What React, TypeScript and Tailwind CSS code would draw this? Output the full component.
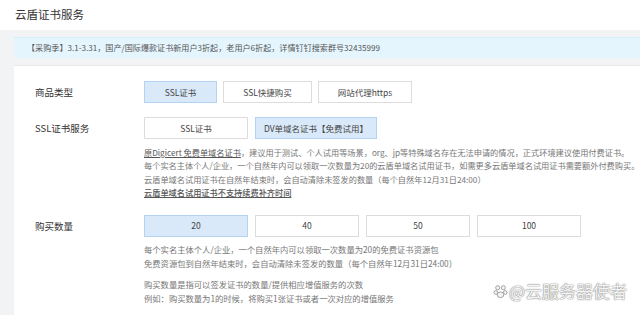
import React from "react";

const Btn = ({ children, active, w }: { children: React.ReactNode; active?: boolean; w: string }) => (
  <div
    className={`${w} h-[22px] flex items-center justify-center border text-[8.5px] text-[#444] ${
      active ? "bg-[#d9e9f9] border-[#b3d3f2]" : "bg-white border-[#dcdcdc]"
    }`}
  >
    {children}
  </div>
);

export default function App() {
  return (
    <div
      className="w-[640px] h-[315px] overflow-hidden bg-[#f2f3f5] relative"
      style={{ fontFamily: '"Noto Sans CJK SC", "Noto Sans", sans-serif' }}
    >
      <div className="h-[30px] bg-white pl-[15px] flex items-center text-[11.5px] text-[#333]">云盾证书服务</div>
      <div className="pl-[14px] pt-[7px]">
        <div className="h-[21px] bg-[#e5f5fe] border-t border-[#d3eefc] flex items-center pl-[13px] text-[8.1px] text-[#555] whitespace-nowrap">
          【采购季】3.1-3.31，国产/国际爆款证书新用户3折起，老用户6折起，详情钉钉搜索群号32435999
        </div>
        <div className="mt-[7px] bg-white h-[260px] pl-[21px] pt-[15px] border-t border-[#e8e8e8]">
          <div className="flex items-center">
            <div className="w-[109px] text-[9.5px] text-[#333]">商品类型</div>
            <div className="flex gap-[6px]">
              <Btn w="w-[73px]" active>SSL证书</Btn>
              <Btn w="w-[89px]">SSL快捷购买</Btn>
              <Btn w="w-[94px]">网站代理https</Btn>
            </div>
          </div>
          <div className="flex items-center mt-[14px]">
            <div className="w-[109px] text-[9.5px] text-[#333]">SSL证书服务</div>
            <div className="flex gap-[7px]">
              <Btn w="w-[104px]">SSL证书</Btn>
              <Btn w="w-[122px]" active>DV单域名证书【免费试用】</Btn>
            </div>
          </div>
          <div className="ml-[109px] mt-[7px] text-[8.2px] leading-[13.4px] text-[#777] whitespace-nowrap">
            <div>
              <span className="underline text-[#555]">原Digicert 免费单域名证书</span>，建议用于测试、个人试用等场景，org、jp等特殊域名存在无法申请的情况，正式环境建议使用付费证书。
            </div>
            <div>每个实名主体个人/企业，一个自然年内可以领取一次数量为20的云盾单域名试用证书，如需更多云盾单域名试用证书需要额外付费购买。</div>
            <div>云盾单域名试用证书在自然年结束时，会自动清除未签发的数量（每个自然年12月31日24:00）</div>
            <div className="underline text-[#555] font-medium">云盾单域名试用证书不支持续费补齐时间</div>
          </div>
          <div className="flex items-center mt-[15px]">
            <div className="w-[109px] text-[9.5px] text-[#333]">购买数量</div>
            <div className="flex gap-[7px]">
              <Btn w="w-[104px]" active>20</Btn>
              <Btn w="w-[104px]">40</Btn>
              <Btn w="w-[104px]">50</Btn>
              <Btn w="w-[104px]">100</Btn>
            </div>
          </div>
          <div className="ml-[109px] mt-[5px] text-[8.3px] leading-[14px] text-[#777] whitespace-nowrap">
            <div>每个实名主体个人/企业，一个自然年内可以领取一次数量为20的免费证书资源包</div>
            <div>免费资源包到自然年结束时，会自动清除未签发的数量（每个自然年12月31日24:00）</div>
            <div className="mt-[7px]">购买数量是指可以签发证书的数量/提供相应增值服务的次数</div>
            <div>例如：购买数量为1的时候，将购买1张证书或者一次对应的增值服务</div>
          </div>
        </div>
      </div>
      <div className="absolute left-[493px] top-[279px] flex items-center gap-[1px] text-[17px] leading-[24px] text-[#f4f4f4]" style={{ textShadow: "0 0 1.5px #777, 0 0 1px #888" }}>
        <svg width="15" height="15" viewBox="0 0 16 16">
          <g fill="#f4f4f4" stroke="#888" strokeWidth="0.8">
            <circle cx="5" cy="4" r="2.2" />
            <circle cx="11" cy="4" r="2.2" />
            <circle cx="3" cy="9" r="2" />
            <circle cx="13" cy="9" r="2" />
            <ellipse cx="8" cy="11.5" rx="3.5" ry="3" />
          </g>
        </svg>
        <span>@云服务器使者</span>
      </div>
    </div>
  );
}
